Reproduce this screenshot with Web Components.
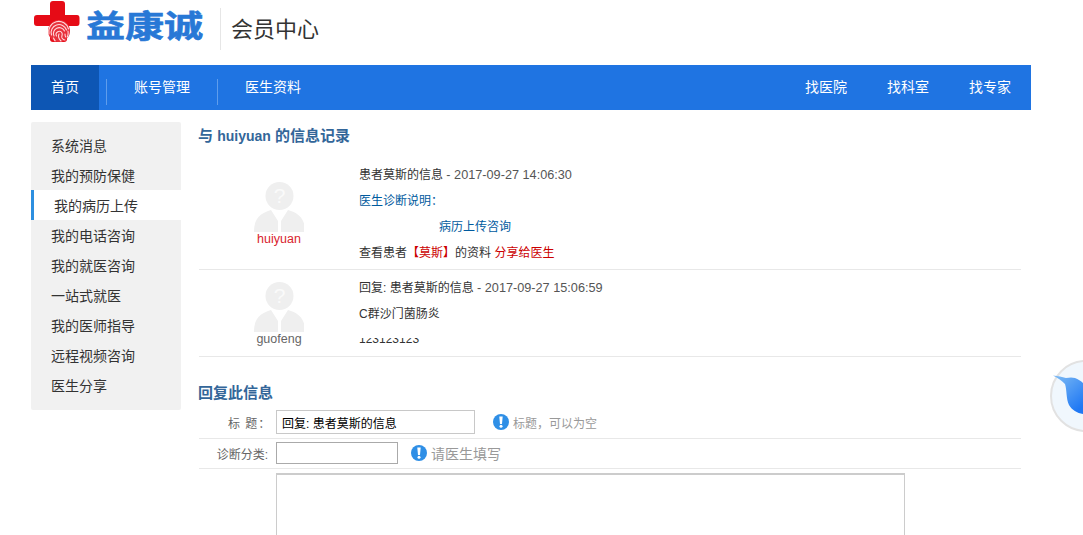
<!DOCTYPE html>
<html lang="zh">
<head>
<meta charset="utf-8">
<title>会员中心</title>
<style>
  html, body { margin: 0; height: 535px; overflow: hidden; background: #fff; }
  body { font: 12px "Liberation Sans", "Noto Sans CJK SC", sans-serif; color: #333; }
  .page { width: 1000px; margin-left: 31px; }
  .cols { display: flex; margin-top: 12px; }
</style>
</head>
<body>
<div class="page">
  <site-header></site-header>
  <main-nav></main-nav>
  <div class="cols">
    <side-menu></side-menu>
    <record-panel></record-panel>
  </div>
</div>
<float-bird></float-bird>

<script>
class SiteHeader extends HTMLElement {
  constructor() {
    super();
    this.attachShadow({ mode: 'open' }).innerHTML = `
      <style>
        :host { display: flex; height: 65px; align-items: flex-start; }
        svg { margin: 1px 0 0 3px; flex: none; }
        .brand { width: 122px; margin: 1px 0 0 6px; font: 700 31px/45px "Noto Sans CJK SC", sans-serif; color: #2878d6; -webkit-text-stroke: .6px #2878d6; white-space: nowrap; }
        .brand span { display: inline-block; transform: scaleX(1.26); transform-origin: left center; }
        .line { width: 1px; height: 42px; margin: 8px 10px 0 12px; background: #e6e6e6; flex: none; }
        .sub { font: 400 22px/42px "Noto Sans CJK SC", sans-serif; color: #333; margin-top: 6px; white-space: nowrap; }
      </style>
      <svg width="46" height="42" viewBox="0 0 46 42">
        <path d="M16 3q0-3 3-3h9q3 0 3 3v11h12q2.500 0 2.500 3v5q0 3-2.500 3H33v13q0 3-3 3H19q-3 0-3-3V25H3q-3 0-3-3v-5q0-3 3-3h13z" fill="#e60b16"/>
        <circle cx="25" cy="30" r="11" fill="#e8323c"/>
        <g fill="none" stroke="#ffd9dc" stroke-width="1.100" stroke-linecap="round">
          <path d="M15 33a10 10 0 0 1 19.500-5"/>
          <path d="M17.500 34a7.800 7.800 0 0 1 15-5"/>
          <path d="M20 35a5.500 5.500 0 0 1 10.500-5"/>
          <path d="M22.500 35a3 3 0 0 1 5.500-3c1 2-1 3 0 5 .6 1 1.800 2 3 2"/>
          <path d="M25 33c-1 2 0 5 2 7"/>
          <path d="M34 30c.4 2 .2 4-.6 6"/>
          <path d="M31 33c0 1.500.2 2.500.8 3"/>
          <path d="M19.500 37c.4 1 1 2 1.600 2.800"/>
        </g>
      </svg>
      <div class="brand"><span>益康诚</span></div>
      <div class="line"></div>
      <div class="sub">会员中心</div>
    `;
  }
}
customElements.define('site-header', SiteHeader);

class MainNav extends HTMLElement {
  constructor() {
    super();
    this.attachShadow({ mode: 'open' }).innerHTML = `
      <style>
        :host { display: flex; height: 45px; background: #1f74e2; color: #fff; font-size: 14px; line-height: 45px; }
        .home { width: 68px; text-align: center; background: #0d56b4; }
        .sep { width: 1px; height: 26px; margin-top: 14px; background: #5f9dec; flex: none; }
        .left { display: flex; }
        .right { margin-left: auto; display: flex; gap: 40px; padding-right: 20px; }
      </style>
      <div class="left">
        <div class="home">首页</div>
        <div class="sep" style="margin-left:7px"></div>
        <div style="margin:0 27px 0 27px">账号管理</div>
        <div class="sep"></div>
        <div style="margin-left:27px">医生资料</div>
      </div>
      <div class="right"><div>找医院</div><div>找科室</div><div>找专家</div></div>
    `;
  }
}
customElements.define('main-nav', MainNav);

class SideMenu extends HTMLElement {
  connectedCallback() {
    const items = ['系统消息', '我的预防保健', '我的病历上传', '我的电话咨询', '我的就医咨询', '一站式就医', '我的医师指导', '远程视频咨询', '医生分享'];
    const rows = items.map(t => `<div class="${t == '我的病历上传' ? 'item on' : 'item'}">${t}</div>`).join('');
    this.attachShadow({ mode: 'open' }).innerHTML = `
      <style>
        :host { display: block; width: 150px; height: 288px; padding-top: 8px; box-sizing: border-box; background: #f1f1f1; border-radius: 2px; flex: none; align-self: flex-start; }
        .item { height: 30px; line-height: 32px; padding-left: 20px; font-size: 14px; color: #333; white-space: nowrap; }
        .on { background: #fff; border-left: 3px solid #2d8fe0; }
      </style>
      ${rows}
    `;
  }
}
customElements.define('side-menu', SideMenu);

// avatar and name column plus the message text in the slot
class MsgRow extends HTMLElement {
  connectedCallback() {
    const name = this.getAttribute('name') || '';
    const color = this.getAttribute('color') || '#666';
    this.attachShadow({ mode: 'open' }).innerHTML = `
      <style>
        :host { display: flex; border-bottom: 1px solid #e8e8e8; }
        .who { width: 160px; flex: none; display: flex; flex-direction: column; align-items: center; }
        svg { display: block; }
        .name { font-size: 12.5px; line-height: 14px; color: ${color}; }
        .txt { flex: 1; }
      </style>
      <div class="who" style="padding-top:${this.getAttribute('top') || 0}px">
        <svg width="50" height="50" viewBox="0 0 50 50">
          <circle cx="25.500" cy="14" r="14" fill="#efefef"/>
          <text x="25.500" y="21" text-anchor="middle" font-size="21" font-family="Liberation Sans" fill="#fafafa">?</text>
          <path d="M0 50c0-10 3-17 14-21l3-1 7 11v11zM51 50c0-10-3-17-14-21l-3-1-7 11v11z" fill="#efefef"/>
        </svg>
        <div class="name">${name}</div>
      </div>
      <div class="txt"><slot></slot></div>
    `;
  }
}
customElements.define('msg-row', MsgRow);

class HintIcon extends HTMLElement {
  constructor() {
    super();
    this.attachShadow({ mode: 'open' }).innerHTML = `
      <style>:host { display: block; width: 16px; height: 16px; flex: none; } svg { display: block; }</style>
      <svg width="16" height="16" viewBox="0 0 16 16">
        <circle cx="8" cy="8" r="8" fill="#2f8fe6"/>
        <path d="M6.300 2.500h3.400l-.7 7.500H7z" fill="#fff"/>
        <circle cx="8" cy="12.300" r="1.500" fill="#fff"/>
      </svg>
    `;
  }
}
customElements.define('hint-icon', HintIcon);

class FormRow extends HTMLElement {
  connectedCallback() {
    this.attachShadow({ mode: 'open' }).innerHTML = `
      <style>
        :host { display: flex; align-items: center; height: 30px; padding-bottom: 1px; border-bottom: 1px solid #e8e8e8; box-sizing: border-box; }
        .lab { width: 69px; box-sizing: border-box; text-align: right; color: #666; font-size: 12px; flex: none; white-space: nowrap; }
        .box { margin-left: 8px; display: flex; align-items: center; }
      </style>
      <div class="lab" style="${this.getAttribute('labstyle') || ''}">${this.getAttribute('label')}</div>
      <div class="box"><slot></slot></div>
    `;
  }
}
customElements.define('form-row', FormRow);

class RecordPanel extends HTMLElement {
  constructor() {
    super();
    this.attachShadow({ mode: 'open' }).innerHTML = `
      <style>
        :host { display: block; width: 823px; margin-left: 17px; }
        h3 { margin: 0; font-size: 15px; line-height: 28px; color: #336699; font-weight: 700; }
        h3 span { font-size: 14px; }
        .list { margin: 12px 0 0 1px; }
        .l { line-height: 26px; font-size: 12px; color: #333; white-space: nowrap; }
        .date { color: #555; font-size: 12.7px; }
        .blue { color: #005a9e; }
        .red { color: #c00; }
        .clip { height: 6px; overflow: hidden; line-height: 14px; font-size: 12px; margin-top: 11px; }
        .clip span { display: block; margin-top: -6px; }
        .reply { margin-top: 22px; }
        .rows { margin-left: 1px; }
        input { box-sizing: border-box; margin: 0; padding: 0 5px; font: 12px "Liberation Sans", "Noto Sans CJK SC", sans-serif; color: #000; outline: none; }
        .t1 { width: 199px; height: 24px; border: 1px solid #c8c8c8; }
        .t2 { width: 122px; height: 22px; border: 1px solid #aaa; }
        .hint { display: flex; align-items: center; color: #999; gap: 4px; white-space: nowrap; }
        textarea { display: block; box-sizing: border-box; width: 629px; height: 100px; margin: 4px 0 0 77px; border: 1px solid #ccc; border-top-width: 2px; resize: none; }
      </style>
      <h3>与 <span>huiyuan</span> 的信息记录</h3>
      <div class="list">
        <msg-row name="huiyuan" color="#d9232e" top="20" style="height:107px">
          <div class="l"><span>患者莫斯的信息</span> <span class="date">- 2017-09-27 14:06:30</span></div>
          <div class="l blue">医生诊断说明：</div>
          <div class="l blue" style="padding-left:80px">病历上传咨询</div>
          <div class="l">查看患者<span class="red">【莫斯】</span>的资料 <span class="red">分享给医生</span></div>
        </msg-row>
        <msg-row name="guofeng" top="12" style="height:86px">
          <div class="l" style="margin-top:5px"><span>回复: 患者莫斯的信息</span> <span class="date">- 2017-09-27 15:06:59</span></div>
          <div class="l">C群沙门菌肠炎</div>
          <div class="clip"><span>123123123</span></div>
        </msg-row>
      </div>
      <div class="reply">
        <h3>回复此信息</h3>
        <div class="rows">
          <form-row label="标 题：" labstyle="letter-spacing:1px;text-align:left;padding-left:29px" style="height:32px">
            <input class="t1" value="回复: 患者莫斯的信息">
            <div class="hint" style="margin-left:18px"><hint-icon></hint-icon>标题，可以为空</div>
          </form-row>
          <form-row label="诊断分类:">
            <input class="t2">
            <div class="hint" style="margin-left:13px;font-size:14px"><hint-icon></hint-icon>请医生填写</div>
          </form-row>
          <textarea></textarea>
        </div>
      </div>
    `;
  }
}
customElements.define('record-panel', RecordPanel);

// round floating widget, half off the right edge of the window
class FloatBird extends HTMLElement {
  constructor() {
    super();
    this.attachShadow({ mode: 'open' }).innerHTML = `
      <style>
        :host { position: fixed; left: 1050px; top: 360px; width: 33px; height: 72px; overflow: hidden; }
        svg { display: block; }
      </style>
      <svg width="33" height="72" viewBox="0 0 33 72">
        <defs><linearGradient id="g" x1="0" y1="0" x2="0.7" y2="1"><stop offset="0" stop-color="#7fbcf4"/><stop offset="1" stop-color="#1f78f4"/></linearGradient></defs>
        <circle cx="36" cy="36" r="35" fill="#f0f7fd" stroke="#e2e2e2" stroke-width="2"/>
        <path d="M3 15.500c5 .2 9 1.800 13 2.500 3-.6 6-1 9 0 3 1 6 3 8 5v31c-6-1-11-4-14-9-3-6-2-15-4-21-3-3-7-6-12-8.500z" fill="url(#g)"/>
      </svg>
    `;
  }
}
customElements.define('float-bird', FloatBird);
</script>
</body>
</html>
